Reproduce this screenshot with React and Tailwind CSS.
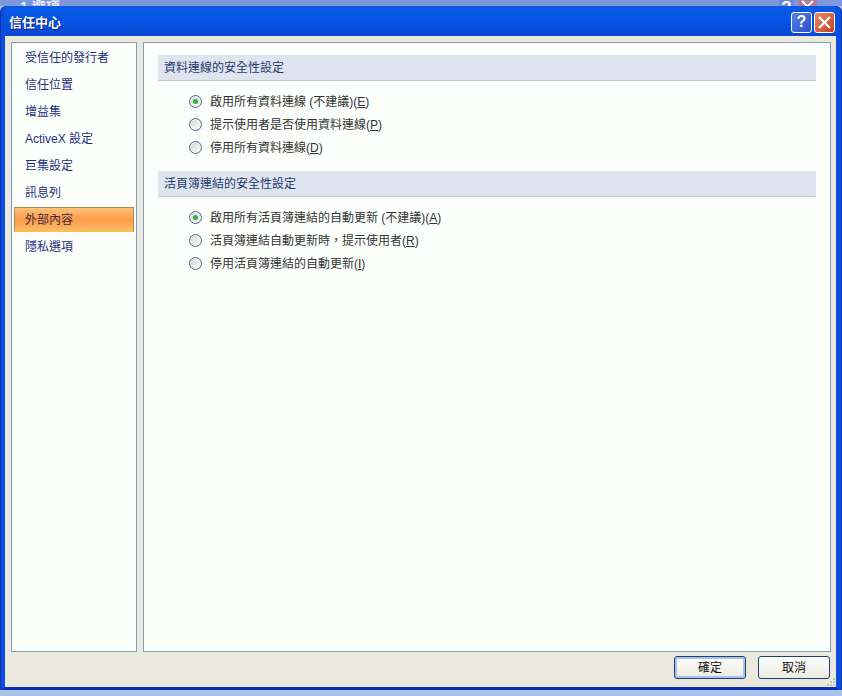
const navItems = ["受信任的發行者", "信任位置", "增益集", "ActiveX 設定", "巨集設定", "訊息列", "外部內容", "隱私選項"];

const sections = [
  {
    title: "資料連線的安全性設定",
    options: [
      { label: "啟用所有資料連線 (不建議)", key: "E", checked: true },
      { label: "提示使用者是否使用資料連線", key: "P" },
      { label: "停用所有資料連線", key: "D" },
    ],
  },
  {
    title: "活頁簿連結的安全性設定",
    options: [
      { label: "啟用所有活頁簿連結的自動更新 (不建議)", key: "A", checked: true },
      { label: "活頁簿連結自動更新時，提示使用者", key: "R" },
      { label: "停用活頁簿連結的自動更新", key: "I" },
    ],
  },
];

function Radio({ checked }) {
  return (
    <span className="flex h-[13px] w-[13px] items-center justify-center rounded-full border border-[#4a6a94] bg-gradient-to-br from-[#d4d4cc] to-white shadow-[inset_0_0_0_1px_#f4f4f0]">
      {checked && <span className="h-[5px] w-[5px] rounded-full bg-[#36b04a]" />}
    </span>
  );
}

function Section({ title, options }) {
  return (
    <div>
      <div className="flex h-[26px] items-center border-b border-[#c2c8d2] bg-[#dfe5ee] pl-[6px] text-[12px] leading-none text-[#1e3a6e]">
        {title}
      </div>
      <div className="flex flex-col pl-[31px] pt-[9px]">
        {options.map((o) => (
          <div key={o.key} className="flex h-[23px] items-center gap-[8px] text-[12px] text-[#333]">
            <Radio checked={o.checked} />
            <span>
              {o.label}(<span className="underline">{o.key}</span>)
            </span>
          </div>
        ))}
      </div>
    </div>
  );
}

function TitleButton({ children, className }) {
  return (
    <div className={`flex h-[21px] w-[21px] items-center justify-center rounded-[3px] border border-white text-white ${className}`}>
      {children}
    </div>
  );
}

export default function App() {
  return (
    <div
      className="relative flex h-[696px] w-[842px] flex-col overflow-hidden bg-[#a8c4ec] text-[12px]"
      style={{ fontFamily: '"Liberation Sans", "Noto Sans CJK TC", sans-serif' }}
    >
      {/* window behind the dialog */}
      <div className="relative h-[6px] shrink-0 overflow-hidden bg-[#7f97dc]">
        <span className="absolute left-[20px] top-[-1px] text-[14px] font-bold leading-[16px] text-[#e6ecff]">1 選項</span>
        <div className="absolute left-[779px] top-[-1px] flex h-[21px] w-[15px] justify-center rounded-[3px] bg-[#6f88d2] text-[17px] font-bold leading-[18px] text-white">
          ?
        </div>
        <div className="absolute left-[798px] top-[-1px] flex h-[21px] w-[19px] justify-center rounded-[3px] bg-[#b37a98]">
          <svg width="15" height="15" viewBox="0 0 15 15" fill="none" stroke="white" strokeWidth="2">
            <path d="M2 2L13 13M13 2L2 13" />
          </svg>
        </div>
      </div>

      <div className="mx-[1px] flex h-[684px] shrink-0 flex-col overflow-hidden rounded-t-[6px] border-b-[3px] border-l-[4px] border-r-[5px] border-b-[#0a2fb0] border-l-[#0a4ee0] border-r-[#0a4ee0] bg-[#0a4ee0] shadow-[1px_0_0_#0a2fb0,-1px_0_0_#0a2fb0]">
        {/* title bar */}
        <div className="flex h-[30px] shrink-0 items-center justify-between bg-gradient-to-b from-[#0a5ae6] via-[#0454e4] to-[#0a48d4] pl-[4px] pr-[1px] pt-[2px]">
          <span className="mt-[1px] text-[13px] font-bold text-white [text-shadow:1px_1px_0_#0a1e80]">信任中心</span>
          <div className="flex gap-[2px]">
            <TitleButton className="bg-gradient-to-br from-[#5a80e8] to-[#2a50c8]">
              <span className="text-[16px] font-bold leading-none">?</span>
            </TitleButton>
            <TitleButton className="bg-gradient-to-br from-[#e88868] to-[#c83c18]">
              <svg width="15" height="15" viewBox="0 0 15 15" fill="none" stroke="white" strokeWidth="2.4">
                <path d="M2 2L13 13M13 2L2 13" />
              </svg>
            </TitleButton>
          </div>
        </div>

        {/* body */}
        <div className="relative flex min-h-0 flex-1 flex-col bg-[#ebe9dd]">
          <div className="flex h-[616px] shrink-0 gap-[6px] pl-[6px] pr-[5px] pt-[6px]">
            <div className="flex w-[126px] shrink-0 flex-col border border-[#7f9db9] bg-[#fdfffd] px-[2px] pt-[1px]">
              {navItems.map((item) =>
                item === "外部內容" ? (
                  <div key={item} className="h-[27px] shrink-0 py-[1px]">
                    <div className="flex h-[25px] items-center border border-[#b08a50] border-b-[#fbc040] bg-gradient-to-b from-[#fdc27a] via-[#fb9c48] to-[#fdbc68] pl-[10px] text-[#4a2a40]">
                      {item}
                    </div>
                  </div>
                ) : (
                  <div key={item} className="flex h-[27px] shrink-0 items-center pl-[11px] text-[#1e2f7e]">
                    {item}
                  </div>
                ),
              )}
            </div>

            <div className="flex flex-1 flex-col gap-[12px] border border-[#7f9db9] bg-[#fdfffd] px-[14px] pt-[12px]">
              {sections.map((s) => (
                <Section key={s.title} title={s.title} options={s.options} />
              ))}
            </div>
          </div>

          {/* footer */}
          <div className="flex justify-end gap-[12px] pr-[6px] pt-[4px]">
            <button className="h-[23px] w-[72px] rounded-[3px] border border-[#1f3f74] bg-gradient-to-b from-white to-[#ecebe2] text-[12px] text-[#111] shadow-[inset_0_0_0_2px_#a8c4ec]">
              確定
            </button>
            <button className="h-[23px] w-[72px] rounded-[3px] border border-[#1f3f74] bg-gradient-to-b from-white to-[#ecebe2] text-[12px] text-[#111]">
              取消
            </button>
          </div>

          {/* resize grip */}
          <svg className="absolute bottom-[1px] right-0" width="9" height="8" viewBox="0 0 9 8" fill="#c8c5b5">
            <rect x="6" y="0" width="2" height="2" />
            <rect x="3" y="3" width="2" height="2" />
            <rect x="6" y="3" width="2" height="2" />
            <rect x="0" y="6" width="2" height="2" />
            <rect x="3" y="6" width="2" height="2" />
            <rect x="6" y="6" width="2" height="2" />
          </svg>
        </div>
      </div>
    </div>
  );
}
